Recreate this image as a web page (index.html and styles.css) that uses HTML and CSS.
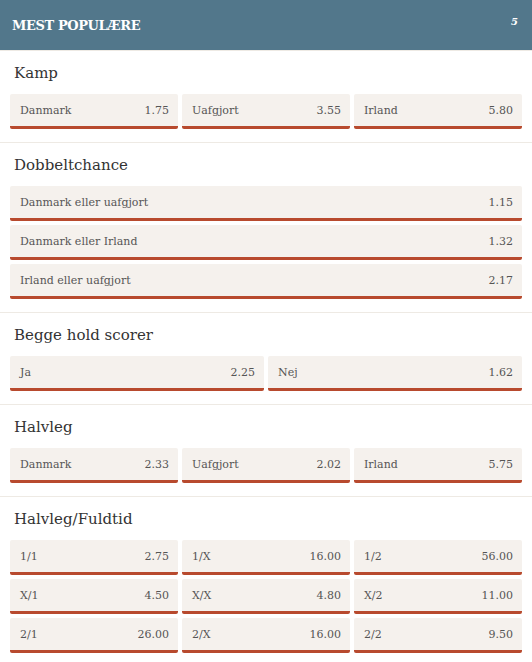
FILE: index.html
```html
<!DOCTYPE html>
<html lang="da">
<head>
    <meta charset="UTF-8">
    <meta name="viewport" content="width=device-width, initial-scale=1.0">
    <title>Mest populære</title>
    <link rel="stylesheet" href="styles.css">
</head>
<body>

<div class="panel">
    <div class="panel-header">
        <h2>MEST POPULÆRE</h2>
        <span class="count">5</span>
    </div>

    <div class="market">
        <h3>Kamp</h3>
        <div class="odds cols-3">
            <div class="bet"><span>Danmark</span><span>1.75</span></div>
            <div class="bet"><span>Uafgjort</span><span>3.55</span></div>
            <div class="bet"><span>Irland</span><span>5.80</span></div>
        </div>
    </div>

    <div class="market">
        <h3>Dobbeltchance</h3>
        <div class="odds cols-1">
            <div class="bet"><span>Danmark eller uafgjort</span><span>1.15</span></div>
            <div class="bet"><span>Danmark eller Irland</span><span>1.32</span></div>
            <div class="bet"><span>Irland eller uafgjort</span><span>2.17</span></div>
        </div>
    </div>

    <div class="market">
        <h3>Begge hold scorer</h3>
        <div class="odds cols-2">
            <div class="bet"><span>Ja</span><span>2.25</span></div>
            <div class="bet"><span>Nej</span><span>1.62</span></div>
        </div>
    </div>

    <div class="market">
        <h3>Halvleg</h3>
        <div class="odds cols-3">
            <div class="bet"><span>Danmark</span><span>2.33</span></div>
            <div class="bet"><span>Uafgjort</span><span>2.02</span></div>
            <div class="bet"><span>Irland</span><span>5.75</span></div>
        </div>
    </div>

    <div class="market">
        <h3>Halvleg/Fuldtid</h3>
        <div class="odds cols-3">
            <div class="bet"><span>1/1</span><span>2.75</span></div>
            <div class="bet"><span>1/X</span><span>16.00</span></div>
            <div class="bet"><span>1/2</span><span>56.00</span></div>
            <div class="bet"><span>X/1</span><span>4.50</span></div>
            <div class="bet"><span>X/X</span><span>4.80</span></div>
            <div class="bet"><span>X/2</span><span>11.00</span></div>
            <div class="bet"><span>2/1</span><span>26.00</span></div>
            <div class="bet"><span>2/X</span><span>16.00</span></div>
            <div class="bet"><span>2/2</span><span>9.50</span></div>
        </div>
    </div>
</div>

</body>
</html>
```

FILE: styles.css
```css
body {
    margin: 0;
    background-color: #ffffff;
    font-family: "DejaVu Serif", serif;
    color: #333;
}
.panel-header {
    display: flex;
    justify-content: space-between;
    align-items: center;
    height: 50px;
    padding: 0 14px 0 12px;
    background-color: #52778b;
    color: #fff;
}
.panel-header h2 {
    margin: 0;
    font-size: 13px;
    font-weight: bold;
    letter-spacing: -0.4px;
}
.panel-header .count {
    font-size: 10px;
    font-weight: bold;
    font-style: italic;
    margin-top: -8px;
}
.market {
    padding: 9px 10px 13px;
    border-top: 1px solid #eeeae4;
}
.market:first-of-type {
    border-top: none;
}
.market h3 {
    margin: 0 0 8px 4px;
    font-size: 15px;
    font-weight: normal;
    line-height: 26px;
    color: #333;
}
.odds {
    display: grid;
    gap: 4px;
}
.cols-1 { grid-template-columns: 1fr; }
.cols-2 { grid-template-columns: 1fr 1fr; }
.cols-3 { grid-template-columns: 1fr 1fr 1fr; }
.bet {
    display: flex;
    justify-content: space-between;
    align-items: center;
    height: 32px;
    padding: 0 9px 0 10px;
    background-color: #f5f1ed;
    border-bottom: 3px solid #b84a2e;
    border-radius: 2px;
    font-size: 11px;
    color: #555;
}
```
